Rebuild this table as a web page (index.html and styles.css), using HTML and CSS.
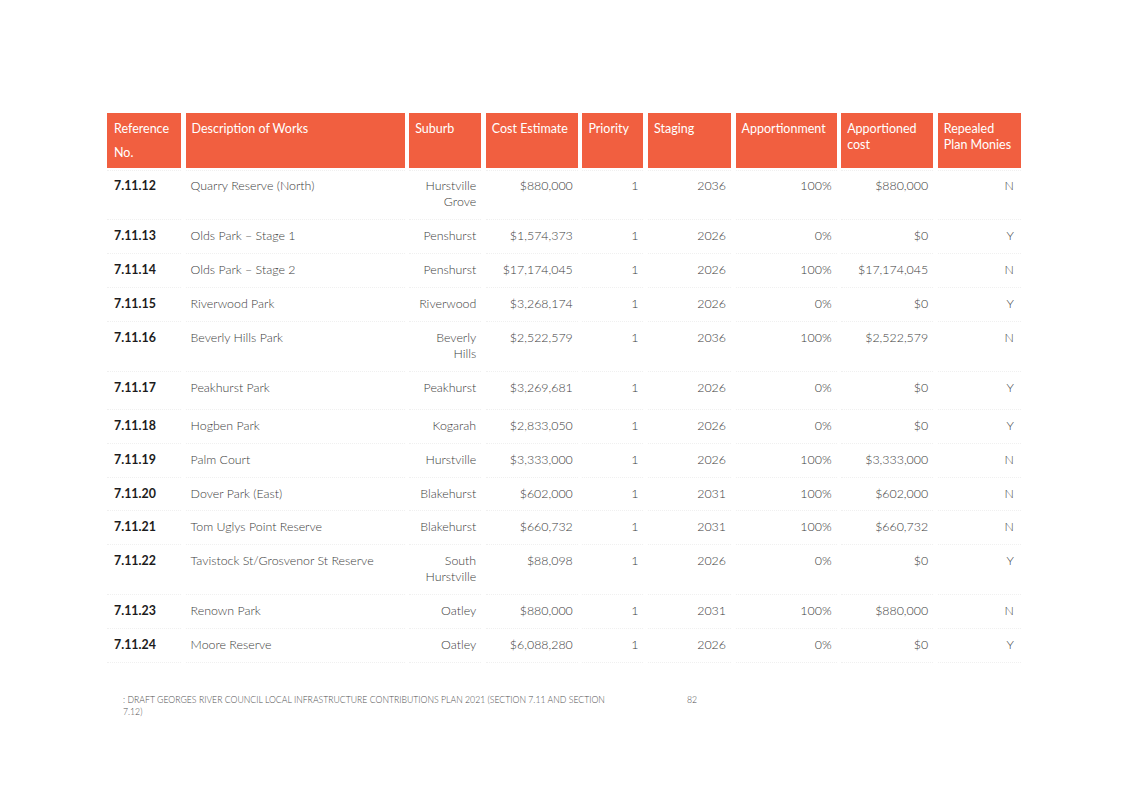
FILE: index.html
```html
<!DOCTYPE html>
<html lang="en">
<head>
<meta charset="utf-8">
<title>Contributions Plan - Works Schedule</title>
<link rel="stylesheet" href="styles.css">
</head>
<body>
<div class="page">
  <div class="table">
    <div class="row head">
      <div class="th th-ref">Reference No.</div>
      <div class="th">Description of Works</div>
      <div class="th">Suburb</div>
      <div class="th">Cost Estimate</div>
      <div class="th">Priority</div>
      <div class="th">Staging</div>
      <div class="th">Apportionment</div>
      <div class="th">Apportioned cost</div>
      <div class="th">Repealed Plan Monies</div>
    </div>

    <div class="row body first">
      <div class="td ref">7.11.12</div>
      <div class="td desc">Quarry Reserve (North)</div>
      <div class="td num sub">Hurstville Grove</div>
      <div class="td num">$880,000</div>
      <div class="td num">1</div>
      <div class="td num">2036</div>
      <div class="td num">100%</div>
      <div class="td num">$880,000</div>
      <div class="td num last">N</div>
    </div>
    <div class="row body">
      <div class="td ref">7.11.13</div>
      <div class="td desc">Olds Park – Stage 1</div>
      <div class="td num sub">Penshurst</div>
      <div class="td num">$1,574,373</div>
      <div class="td num">1</div>
      <div class="td num">2026</div>
      <div class="td num">0%</div>
      <div class="td num">$0</div>
      <div class="td num last">Y</div>
    </div>
    <div class="row body">
      <div class="td ref">7.11.14</div>
      <div class="td desc">Olds Park – Stage 2</div>
      <div class="td num sub">Penshurst</div>
      <div class="td num">$17,174,045</div>
      <div class="td num">1</div>
      <div class="td num">2026</div>
      <div class="td num">100%</div>
      <div class="td num">$17,174,045</div>
      <div class="td num last">N</div>
    </div>
    <div class="row body">
      <div class="td ref">7.11.15</div>
      <div class="td desc">Riverwood Park</div>
      <div class="td num sub">Riverwood</div>
      <div class="td num">$3,268,174</div>
      <div class="td num">1</div>
      <div class="td num">2026</div>
      <div class="td num">0%</div>
      <div class="td num">$0</div>
      <div class="td num last">Y</div>
    </div>
    <div class="row body">
      <div class="td ref">7.11.16</div>
      <div class="td desc">Beverly Hills Park</div>
      <div class="td num sub">Beverly Hills</div>
      <div class="td num">$2,522,579</div>
      <div class="td num">1</div>
      <div class="td num">2036</div>
      <div class="td num">100%</div>
      <div class="td num">$2,522,579</div>
      <div class="td num last">N</div>
    </div>
    <div class="row body tall">
      <div class="td ref">7.11.17</div>
      <div class="td desc">Peakhurst Park</div>
      <div class="td num sub">Peakhurst</div>
      <div class="td num">$3,269,681</div>
      <div class="td num">1</div>
      <div class="td num">2026</div>
      <div class="td num">0%</div>
      <div class="td num">$0</div>
      <div class="td num last">Y</div>
    </div>
    <div class="row body">
      <div class="td ref">7.11.18</div>
      <div class="td desc">Hogben Park</div>
      <div class="td num sub">Kogarah</div>
      <div class="td num">$2,833,050</div>
      <div class="td num">1</div>
      <div class="td num">2026</div>
      <div class="td num">0%</div>
      <div class="td num">$0</div>
      <div class="td num last">Y</div>
    </div>
    <div class="row body">
      <div class="td ref">7.11.19</div>
      <div class="td desc">Palm Court</div>
      <div class="td num sub">Hurstville</div>
      <div class="td num">$3,333,000</div>
      <div class="td num">1</div>
      <div class="td num">2026</div>
      <div class="td num">100%</div>
      <div class="td num">$3,333,000</div>
      <div class="td num last">N</div>
    </div>
    <div class="row body short">
      <div class="td ref">7.11.20</div>
      <div class="td desc">Dover Park (East)</div>
      <div class="td num sub">Blakehurst</div>
      <div class="td num">$602,000</div>
      <div class="td num">1</div>
      <div class="td num">2031</div>
      <div class="td num">100%</div>
      <div class="td num">$602,000</div>
      <div class="td num last">N</div>
    </div>
    <div class="row body">
      <div class="td ref">7.11.21</div>
      <div class="td desc">Tom Uglys Point Reserve</div>
      <div class="td num sub">Blakehurst</div>
      <div class="td num">$660,732</div>
      <div class="td num">1</div>
      <div class="td num">2031</div>
      <div class="td num">100%</div>
      <div class="td num">$660,732</div>
      <div class="td num last">N</div>
    </div>
    <div class="row body">
      <div class="td ref">7.11.22</div>
      <div class="td desc">Tavistock St/Grosvenor St Reserve</div>
      <div class="td num sub">South Hurstville</div>
      <div class="td num">$88,098</div>
      <div class="td num">1</div>
      <div class="td num">2026</div>
      <div class="td num">0%</div>
      <div class="td num">$0</div>
      <div class="td num last">Y</div>
    </div>
    <div class="row body">
      <div class="td ref">7.11.23</div>
      <div class="td desc">Renown Park</div>
      <div class="td num sub">Oatley</div>
      <div class="td num">$880,000</div>
      <div class="td num">1</div>
      <div class="td num">2031</div>
      <div class="td num">100%</div>
      <div class="td num">$880,000</div>
      <div class="td num last">N</div>
    </div>
    <div class="row body">
      <div class="td ref">7.11.24</div>
      <div class="td desc">Moore Reserve</div>
      <div class="td num sub">Oatley</div>
      <div class="td num">$6,088,280</div>
      <div class="td num">1</div>
      <div class="td num">2026</div>
      <div class="td num">0%</div>
      <div class="td num">$0</div>
      <div class="td num last">Y</div>
    </div>
  </div>

  <div class="footer">
    <div class="footer-title">: DRAFT GEORGES RIVER COUNCIL LOCAL INFRASTRUCTURE CONTRIBUTIONS PLAN 2021 (SECTION 7.11 AND SECTION 7.12)</div>
    <div class="footer-page">82</div>
  </div>
</div>
</body>
</html>
```

FILE: styles.css
```css
html, body {
  margin: 0;
  padding: 0;
  background: #ffffff;
}

.page {
  width: 1127px;
  height: 797px;
  padding: 113px 0 0 107px;
  box-sizing: border-box;
  font-family: Lato, "Liberation Sans", sans-serif;
}

.table {
  display: flex;
  flex-direction: column;
  width: 914px;
}

.row {
  display: grid;
  grid-template-columns: 74px 219px 72px 92px 61px 83px 101px 92px 83px;
  column-gap: 4.6px;
}

.head {
  height: 55px;
  margin-bottom: 2px;
}

.th {
  background: #f15f40;
  color: #ffffff;
  font-size: 12.5px;
  font-weight: 400;
  line-height: 16px;
  padding: 8px 2px 0 6px;
}

.th-ref {
  line-height: 24px;
  padding-top: 4px;
  padding-left: 7px;
}

.td {
  font-size: 12.4px;
  line-height: 16px;
  color: #3c3c3c;
  font-weight: 300;
  padding: 8px 6px 9px 5px;
  border-bottom: 1px dotted #f0f0f0;
}

.first .td {
  border-top: 1px dotted #f0f0f0;
  padding-top: 7px;
}

.tall .td {
  padding-bottom: 13px;
}

.short .td {
  padding-bottom: 8px;
}

.ref {
  font-weight: 700;
  color: #1c1c1c;
  padding-left: 7px;
}

.num {
  text-align: right;
  padding-left: 4px;
  padding-right: 5px;
}

.sub {
  padding-left: 10px;
}

.last {
  padding-right: 7px;
}

.footer {
  display: flex;
  align-items: flex-start;
  margin-top: 31px;
  padding-left: 16px;
}

.footer-title {
  width: 490px;
  font-size: 8.7px;
  line-height: 12px;
  color: #505050;
  font-weight: 300;
}

.footer-page {
  margin-left: 74px;
  font-size: 8.7px;
  line-height: 12px;
  color: #505050;
  font-weight: 300;
}
```
